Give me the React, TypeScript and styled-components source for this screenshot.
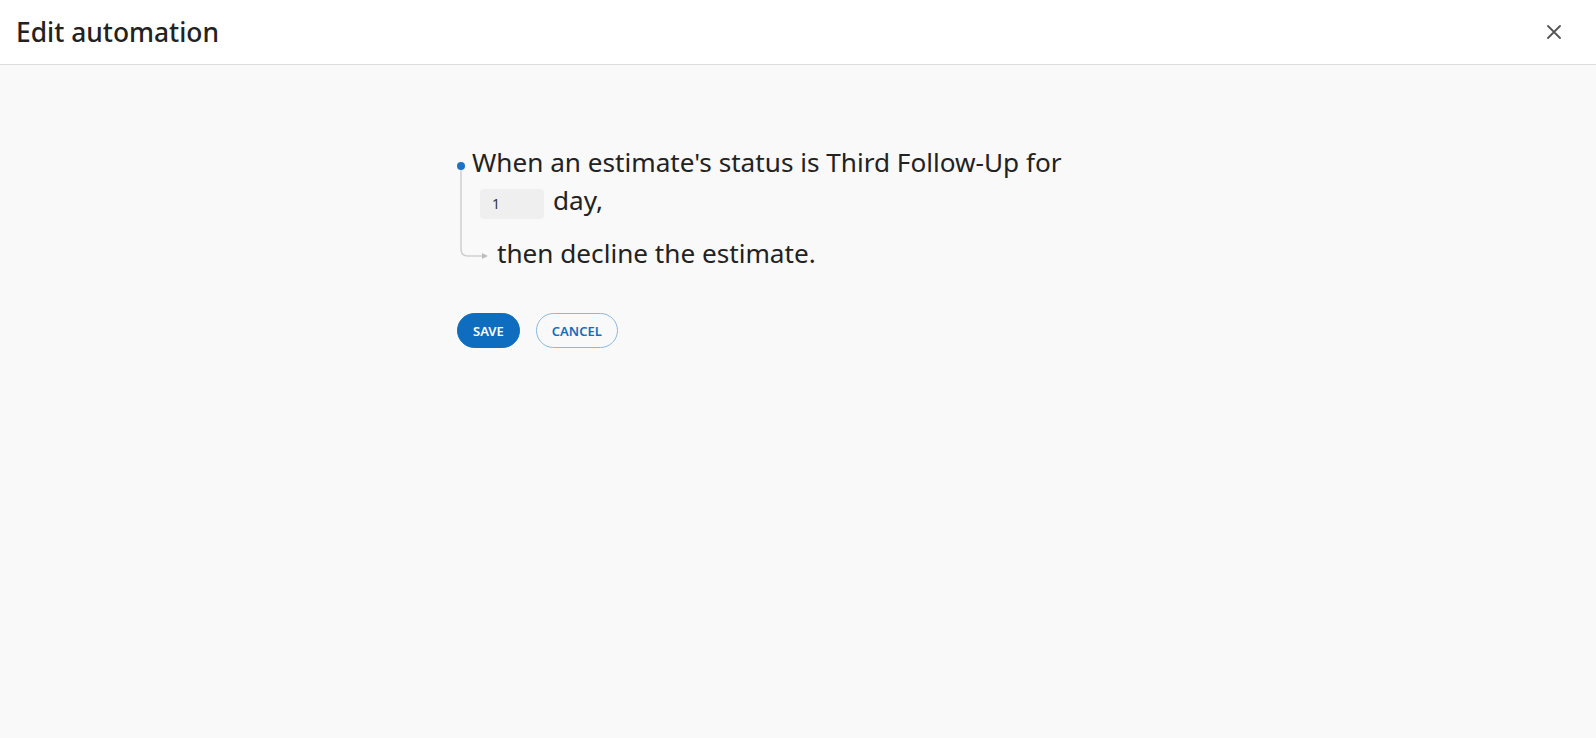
import React, { useState } from 'react';
import styled, { createGlobalStyle } from 'styled-components';

const GlobalStyle = createGlobalStyle`
  html, body {
    margin: 0;
    padding: 0;
    background: #f9f9f9;
  }

  body {
    font-family: 'Noto Sans', 'Open Sans', sans-serif;
    color: #222;
  }

  * {
    box-sizing: border-box;
  }
`;

const Page = styled.div`
  min-height: 738px;
  background: #f9f9f9;
`;

const Header = styled.header`
  display: flex;
  align-items: center;
  justify-content: space-between;
  height: 65px;
  padding: 0 30px 1px 16px;
  background: #fff;
  border-bottom: 1px solid #dcdcdc;
`;

const Title = styled.h1`
  margin: 0;
  font-size: 26.4px;
  line-height: 36px;
  font-weight: 500;
  color: #222;
`;

const CloseButton = styled.button`
  display: flex;
  align-items: center;
  justify-content: center;
  width: 24px;
  height: 24px;
  padding: 0;
  border: none;
  background: transparent;
  color: #555;
  cursor: pointer;
`;

const Body = styled.main`
  width: 682px;
  margin: 0 auto;
  padding-top: 78px;
`;

const Rule = styled.div`
  position: relative;
  padding-left: 15px;
`;

const Connector = styled.svg`
  position: absolute;
  left: 0;
  top: 0;
  overflow: visible;
  pointer-events: none;
`;

const Sentence = styled.p`
  margin: 0;
  width: 620px;
  font-size: 26.15px;
  line-height: 38px;
  color: #222;
`;

const Outcome = styled(Sentence)`
  margin-top: 15px;
  padding-left: 25px;
`;

const DaysInput = styled.input`
  width: 64px;
  height: 30px;
  margin: 0 9px 0 8px;
  padding: 0 12px;
  vertical-align: 1px;
  border: none;
  border-radius: 4px;
  background: #efefef;
  font-family: 'Noto Sans', sans-serif;
  font-size: 14px;
  color: #333;
  outline: none;
`;

const Actions = styled.div`
  display: flex;
  gap: 16px;
  margin-top: 41px;
`;

const Button = styled.button<{ $primary?: boolean }>`
  height: 35px;
  padding: 0 15px;
  border-radius: 18px;
  border: 1px solid ${(p) => (p.$primary ? '#0e6dbe' : '#8cb8e0')};
  background: ${(p) => (p.$primary ? '#0e6dbe' : 'transparent')};
  color: ${(p) => (p.$primary ? '#fff' : '#0e6dbe')};
  font-family: 'Noto Sans', sans-serif;
  font-size: 13px;
  font-weight: 600;
  cursor: pointer;
`;

function App (): React.ReactElement {
  const [days, setDays] = useState('1');

  return (
    <Page>
      <GlobalStyle />
      <Header>
        <Title>Edit automation</Title>
        <CloseButton aria-label='Close'>
          <svg width='14' height='14' viewBox='0 0 14 14'>
            <path d='M1 1 L13 13 M13 1 L1 13' stroke='currentColor' strokeWidth='1.8' strokeLinecap='round' />
          </svg>
        </CloseButton>
      </Header>
      <Body>
        <Rule>
          <Connector width='40' height='120'>
            <circle cx='4' cy='23' r='4' fill='#1a73c9' />
            <path d='M4 27 V106 Q4 113 11 113 H25' fill='none' stroke='#cfcfcf' strokeWidth='1.5' />
            <path d='M25 110 L31 113 L25 116 Z' fill='#bdbdbd' />
          </Connector>
          <Sentence>
            When an estimate's status is Third Follow-Up for
            <DaysInput value={days} onChange={(e) => setDays(e.target.value)} />
            day,
          </Sentence>
          <Outcome>then decline the estimate.</Outcome>
        </Rule>
        <Actions>
          <Button $primary>SAVE</Button>
          <Button>CANCEL</Button>
        </Actions>
      </Body>
    </Page>
  );
}

export default App;
